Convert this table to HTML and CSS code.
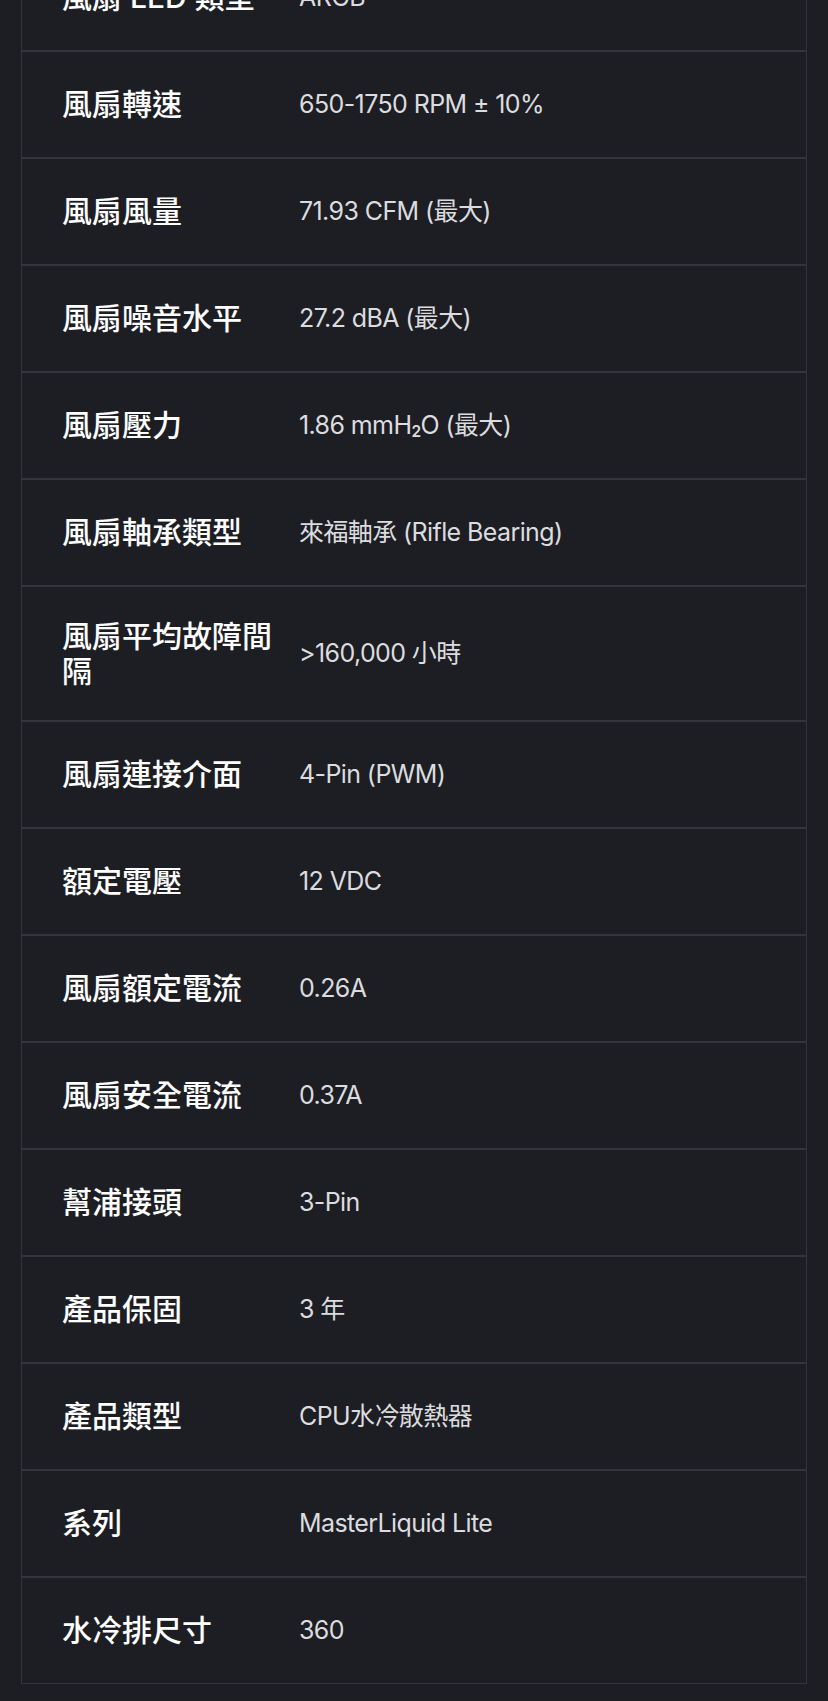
FILE: index.html
```html
<!DOCTYPE html>
<html lang="zh-Hant">
<head>
<meta charset="UTF-8">
<meta name="viewport" content="width=device-width, initial-scale=1.0">
<title>產品規格</title>
<link rel="stylesheet" href="styles.css">
</head>
<body>
<div class="page">
  <div class="specs">
    <div class="spec-row">
      <div class="spec-label">風扇 LED 類型</div>
      <div class="spec-value">ARGB</div>
    </div>
    <div class="spec-row">
      <div class="spec-label">風扇轉速</div>
      <div class="spec-value">650-1750 RPM ± 10%</div>
    </div>
    <div class="spec-row">
      <div class="spec-label">風扇風量</div>
      <div class="spec-value">71.93 CFM (最大)</div>
    </div>
    <div class="spec-row">
      <div class="spec-label">風扇噪音水平</div>
      <div class="spec-value">27.2 dBA (最大)</div>
    </div>
    <div class="spec-row">
      <div class="spec-label">風扇壓力</div>
      <div class="spec-value">1.86 mmH<sub>2</sub>O (最大)</div>
    </div>
    <div class="spec-row">
      <div class="spec-label">風扇軸承類型</div>
      <div class="spec-value">來福軸承 (Rifle Bearing)</div>
    </div>
    <div class="spec-row">
      <div class="spec-label">風扇平均故障間隔</div>
      <div class="spec-value">&gt;160,000 小時</div>
    </div>
    <div class="spec-row">
      <div class="spec-label">風扇連接介面</div>
      <div class="spec-value">4-Pin (PWM)</div>
    </div>
    <div class="spec-row">
      <div class="spec-label">額定電壓</div>
      <div class="spec-value">12 VDC</div>
    </div>
    <div class="spec-row">
      <div class="spec-label">風扇額定電流</div>
      <div class="spec-value">0.26A</div>
    </div>
    <div class="spec-row">
      <div class="spec-label">風扇安全電流</div>
      <div class="spec-value">0.37A</div>
    </div>
    <div class="spec-row">
      <div class="spec-label">幫浦接頭</div>
      <div class="spec-value">3-Pin</div>
    </div>
    <div class="spec-row">
      <div class="spec-label">產品保固</div>
      <div class="spec-value">3 年</div>
    </div>
    <div class="spec-row">
      <div class="spec-label">產品類型</div>
      <div class="spec-value">CPU水冷散熱器</div>
    </div>
    <div class="spec-row">
      <div class="spec-label">系列</div>
      <div class="spec-value">MasterLiquid Lite</div>
    </div>
    <div class="spec-row">
      <div class="spec-label">水冷排尺寸</div>
      <div class="spec-value">360</div>
    </div>
  </div>
</div>
</body>
</html>
```

FILE: styles.css
```css
html,
body {
  margin: 0;
  padding: 0;
  background-color: #1d1e24;
}
body {
  font-family: Inter, "Noto Sans CJK TC", sans-serif;
  color: #fff;
}
.page {
  padding: 0 21px 17px;
  overflow: hidden;
}
.specs {
  margin-top: -56px;
  border: 1px solid #34353c;
}
.spec-row {
  display: flex;
  align-items: center;
}
.spec-row + .spec-row {
  border-top: 2px solid #34353c;
}
.spec-label {
  flex: 0 0 220px;
  padding: 31.5px 0 31.5px 40px;
  font-size: 30px;
  font-weight: 500;
  line-height: 35px;
  color: #fff;
}
.spec-value {
  flex: 1;
  padding: 30.5px 40px 32.5px 17px;
  font-size: 25px;
  letter-spacing: -0.6px;
  line-height: 42px;
  color: #dcdcdf;
}
.spec-value sub {
  font-size: 0.62em;
  font-weight: 600;
  line-height: 0;
  vertical-align: -0.2em;
}
```
